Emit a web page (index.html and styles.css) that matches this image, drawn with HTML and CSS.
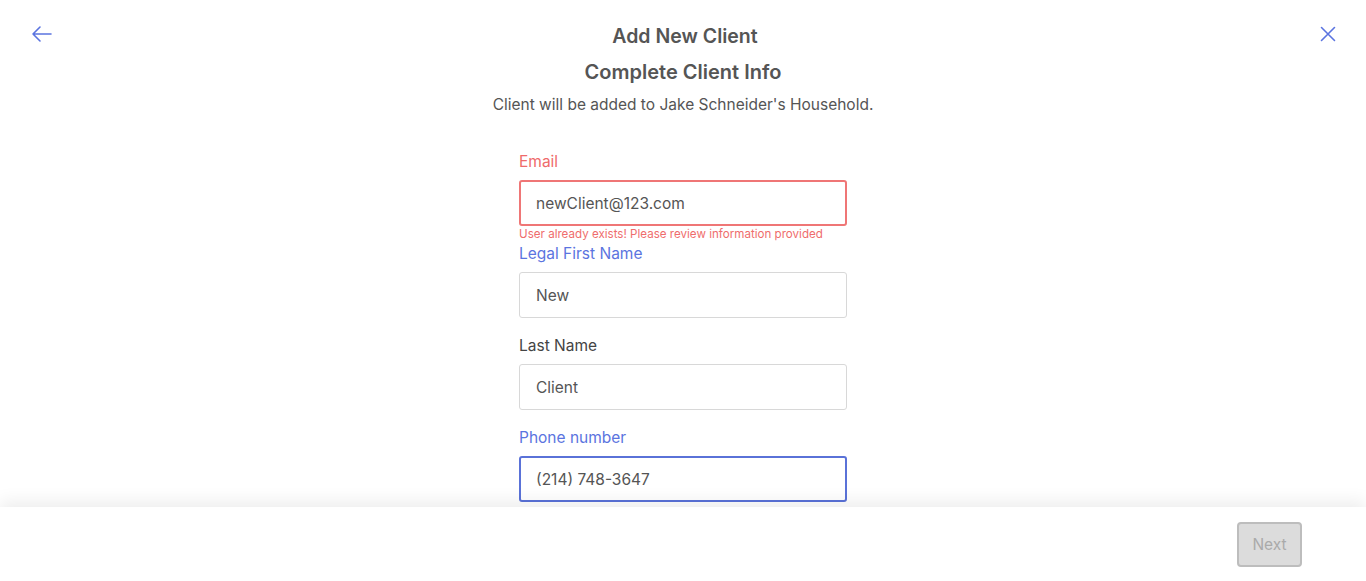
FILE: index.html
```html
<!DOCTYPE html>
<html>
<head>
<meta charset="utf-8">
<link rel="stylesheet" href="styles.css">
</head>
<body>
<div class="page">
  <main class="main">
    <header class="header">
      <button class="icon-btn" aria-label="Back">
        <svg width="22" height="22" viewBox="0 0 22 22" fill="none" stroke="#5b74e0" stroke-width="1.6" stroke-linecap="round" stroke-linejoin="round"><path d="M20 11H2M9 4L2 11L9 18"/></svg>
      </button>
      <h1 class="title">Add New Client</h1>
      <button class="icon-btn" aria-label="Close">
        <svg width="16" height="16" viewBox="0 0 16 16" fill="none" stroke="#5b74e0" stroke-width="1.6" stroke-linecap="round"><path d="M1.5 1.5L14.5 14.5M14.5 1.5L1.5 14.5"/></svg>
      </button>
    </header>
    <h2 class="subtitle">Complete Client Info</h2>
    <p class="note">Client will be added to Jake Schneider's Household.</p>
    <form class="form">
      <div class="field error">
        <label class="label">Email</label>
        <div class="input">newClient@123.com</div>
        <div class="helper">User already exists! Please review information provided</div>
      </div>
      <div class="field active">
        <label class="label">Legal First Name</label>
        <div class="input">New</div>
        <div class="helper"></div>
      </div>
      <div class="field">
        <label class="label">Last Name</label>
        <div class="input">Client</div>
        <div class="helper"></div>
      </div>
      <div class="field focused">
        <label class="label">Phone number</label>
        <div class="input">(214) 748-3647</div>
        <div class="helper"></div>
      </div>
    </form>
  </main>
  <footer class="footer">
    <button class="next" disabled>Next</button>
  </footer>
</div>
</body>
</html>
```
FILE: styles.css
```css
* { box-sizing: border-box; }
html, body { margin: 0; padding: 0; background: #fff; }
body { font-family: Inter, "Noto Sans", sans-serif; color: #555; }
.page { height: 581px; display: flex; flex-direction: column; overflow: hidden; }
.main { flex: 1; overflow: hidden; display: flex; flex-direction: column; align-items: center; }
.header { width: 100%; display: flex; align-items: center; justify-content: space-between; padding: 24px 26px 0 30px; height: 48px; }
.icon-btn { background: none; border: 0; padding: 0; width: 24px; height: 24px; margin: -2px 0 2px; display: flex; align-items: center; justify-content: center; cursor: pointer; }
.title { margin: 0; font-size: 19.5px; font-weight: 600; color: #555; line-height: 24px; }
.subtitle { margin: 11px 0 0; font-size: 20px; font-weight: 600; color: #555; line-height: 26px; }
.note { margin: 10px 0 0; font-size: 15.5px; line-height: 20px; color: #555; }
.form { width: 328px; margin-top: 37px; display: flex; flex-direction: column; }
.field { display: flex; flex-direction: column; }
.label { font-size: 15.5px; line-height: 20px; color: #444; margin-bottom: 8px; }
.input { height: 46px; border: 1px solid #d8d8d8; border-radius: 3px; padding: 0 16px; display: flex; align-items: center; font-size: 15.5px; color: #555; }
.helper { height: 18px; font-size: 11.6px; line-height: 14px; color: #ef6d6d; padding-top: 1px; }
.error .label { color: #ef6b6b; }
.error .input { border: 2px solid #ef7676; padding-left: 15px; }
.active .label { color: #5b74e0; }
.focused .label { color: #5b74e0; }
.focused .input { border: 2px solid #5a72d8; padding-left: 15px; }
.footer { height: 74px; flex: none; background: #fff; display: flex; align-items: center; justify-content: flex-end; padding-right: 64px; box-shadow: 0 -6px 16px rgba(0,0,0,0.07); position: relative; }
.next { width: 65px; height: 45px; background: #dcdcdc; border: 2px solid #bdbdbd; border-radius: 4px; color: #aaa; font-family: inherit; font-size: 15.5px; }
```
